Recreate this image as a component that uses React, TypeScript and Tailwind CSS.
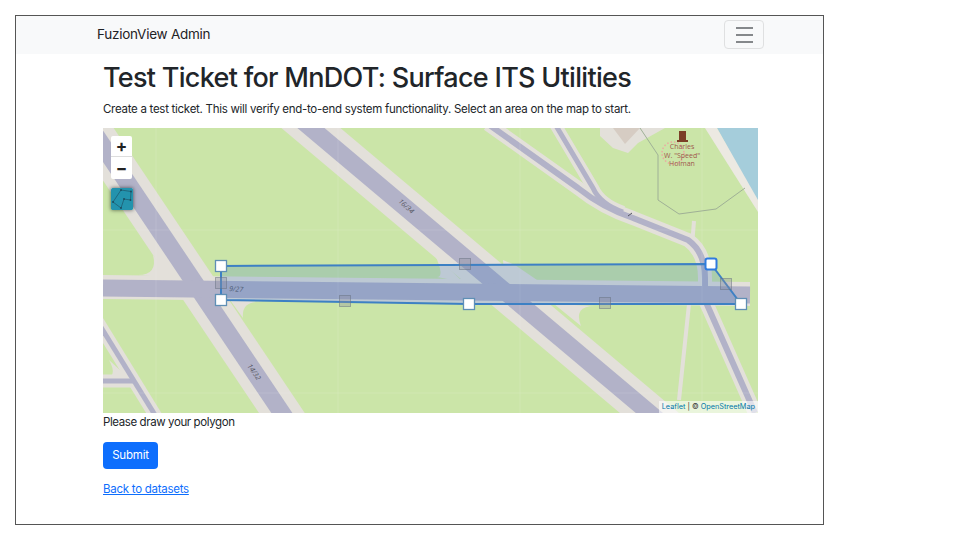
import { Fragment } from "react";

const GREEN = "#cbe5a8";
const SHOULDER = "#e3e0da";
const RUNWAY = "#b2b2c8";

// Map coordinates below are page pixels minus the map's origin (103, 128).
const corners = [
  [118, 138],
  [608, 136],
  [638, 176],
  [366, 176],
  [118, 172],
];
const middles = [
  [118, 155],
  [362, 136],
  [623, 156],
  [502, 175],
  [242, 173],
];
const iconPoints = [
  [2, 14],
  [10, 2],
  [20, 3.5],
  [19.5, 12],
  [13, 11],
  [10, 20],
];

function MapDrawing() {
  return (
    <svg viewBox="0 0 655 285" className="block h-[285px] w-[655px]">
      <rect width="655" height="285" fill={GREEN} />

      {/* water and building */}
      <polygon points="614,0 655,0 655,75" fill="#a5cddb" />
      <polygon points="602,0 614,0 655,72 655,84" fill="#ece9e2" />
      <polygon points="497,0 562,0 535,15 525,25 510,20 497,8" fill={SHOULDER} />
      <polygon points="510,0 537,0 522,16" fill="#d6ccc3" />

      {/* thin paths */}
      <path d="M591 93 L589 118" stroke={SHOULDER} strokeWidth="4" fill="none" />
      <path d="M586 176 L576 272" stroke={SHOULDER} strokeWidth="4" fill="none" />

      {/* shoulders */}
      <g fill="none" stroke={SHOULDER} strokeLinejoin="round">
        <path d="M-27 -22 L201 318" strokeWidth="38" />
        <path d="M158 -42 L588 320" strokeWidth="38" />
        <path d="M-20 170 L60 300" strokeWidth="13" />
        <path d="M0 253 L30 253" strokeWidth="13" />
        <path d="M385 -4 L475 60 Q500 80 530 90 L585 112 Q602 124 602 150 L602 172 L652 285" strokeWidth="14" />
        <path d="M452 -4 L490 60 Q497 76 520 84" strokeWidth="12" />
      </g>
      <polygon points="0,147 647,154 647,178 0,171" fill={SHOULDER} />

      {/* fillets where the runways meet */}
      <g fill={SHOULDER}>
        <path d="M50 127 Q55 147 35 147 L70 150 Z" />
        <path d="M127 172 L160 174 Q138 172 140 190 Z" />
        <path d="M332 127 Q342 149 334 149 L360 154 Z" />
        <path d="M400 132 L412 137 L434 152 L402 154 Z" />
        <path d="M451 176 L492 178 Q470 178 478 198 Z" />
        <path d="M6 232 Q16 250 0 250 L32 256 Z" />
      </g>

      {/* pavement */}
      <g fill="none" stroke={RUNWAY} strokeLinejoin="round">
        <path d="M-27 -22 L201 318" strokeWidth="17.5" />
        <path d="M158 -42 L588 320" strokeWidth="17.5" />
        <path d="M0 160 L647 167" strokeWidth="17" />
        <path d="M-20 170 L60 300" strokeWidth="5" />
        <path d="M0 253 L30 253" strokeWidth="5" />
        <path d="M385 -4 L475 60 Q500 80 530 90 L585 112 Q602 124 602 150 L602 172 L652 285" strokeWidth="6" />
        <path d="M452 -4 L490 60 Q497 76 520 84" strokeWidth="5" />
      </g>

      {/* tile seams */}
      <g stroke="#ffffff" strokeOpacity="0.12" strokeWidth="1">
        <path d="M53 0 V285 M235 0 V285 M417 0 V285 M599 0 V285 M0 102 H655 M0 265 H655" />
      </g>

      {/* boundary line and monument */}
      <path d="M537 0 L555 27 L555 72 L576 86 L613 81 L642 60" fill="none" stroke="#9fb096" strokeWidth="1" />
      <circle cx="570" cy="25" r="11" fill="none" stroke="#eba9a1" strokeWidth="1.5" strokeDasharray="1.5 2" />
      <path d="M576 3 H583 V12 H585 V14 H574 V12 H576 Z" fill="#7b3f26" />
      <g fontFamily="'Open Sans', sans-serif" fontSize="7" fill="#a0584c" textAnchor="middle">
        <text x="579" y="21">Charles</text>
        <text x="579" y="29.5">W. "Speed"</text>
        <text x="579" y="38">Holman</text>
      </g>

      {/* runway labels */}
      <g fontFamily="'Open Sans', sans-serif" fontSize="7" fill="#55555f" fontStyle="italic">
        <text x="126" y="163" transform="rotate(4 126 163)">9/27</text>
        <text x="144" y="238" transform="rotate(55 144 238)">14/32</text>
        <text x="295" y="74" transform="rotate(42 295 74)">16/34</text>
      </g>
      <path d="M525 88 L529 85" stroke="#55555f" strokeWidth="1" />

      {/* drawn polygon */}
      <polygon
        points={corners.map((p) => p.join(",")).join(" ")}
        fill="#2a6ec0"
        fillOpacity="0.2"
        stroke="#3d80c4"
        strokeWidth="2"
        strokeLinejoin="round"
      />
      {middles.map(([x, y]) => (
        <rect
          key={`${x}-${y}`}
          x={x - 5.5}
          y={y - 5.5}
          width="11"
          height="11"
          fill="#8f8f9f"
          fillOpacity="0.35"
          stroke="#667080"
          strokeOpacity="0.5"
        />
      ))}
      {corners.map(([x, y], i) => (
        <Fragment key={`${x}-${y}`}>
          <rect
            x={x - 5.5}
            y={y - 5.5}
            width="11"
            height="11"
            rx={i === 1 ? 2 : 0}
            fill="#ffffff"
            stroke={i === 1 ? "#2f7bdf" : "#5f8fb5"}
            strokeWidth={i === 1 ? 2 : 1.3}
          />
        </Fragment>
      ))}
    </svg>
  );
}

function DrawIcon() {
  return (
    <svg viewBox="0 0 22 22" className="h-[22px] w-[22px]">
      <rect width="22" height="22" rx="1.5" fill="#2393ad" />
      <polygon
        points={iconPoints.map((p) => p.join(",")).join(" ")}
        fill="none"
        stroke="#1c4a5c"
        strokeWidth="0.6"
      />
      {iconPoints.map(([cx, cy]) => (
        <circle key={`${cx}-${cy}`} cx={cx} cy={cy} r="0.9" fill="#1c4a5c" />
      ))}
    </svg>
  );
}

export default function App() {
  return (
    <div
      className="ml-[15px] mt-[15px] h-[510px] w-[809px] overflow-hidden border border-[#555555] bg-white text-[#212529]"
      style={{ fontFamily: "Inter, 'Liberation Sans', sans-serif" }}
    >
      <nav className="flex h-[38px] items-center justify-between bg-[#f8f9fa] pb-[1px] pl-[81px] pr-[59px]">
        <span className="text-[13.5px] tracking-[-0.25px] text-[#1f2225]">FuzionView Admin</span>
        <button className="flex h-[29px] w-[40px] flex-col items-center justify-center gap-[5px] rounded-[4px] border border-[#dfe0e1]">
          <span className="h-[2px] w-[17px] bg-[#85888b]" />
          <span className="h-[2px] w-[17px] bg-[#85888b]" />
          <span className="h-[2px] w-[17px] bg-[#85888b]" />
        </button>
      </nav>

      <main className="pl-[87px]">
        <h1 className="mt-[7px] text-[27px] font-medium leading-[34px] tracking-[-0.7px] text-[#212529]">
          Test Ticket for MnDOT: Surface ITS Utilities
        </h1>
        <p className="mt-[5px] text-[11.5px] leading-[18px] tracking-[-0.28px]">
          Create a test ticket. This will verify end-to-end system functionality. Select an area on the map to start.
        </p>

        <div className="relative mt-[10px] h-[285px] w-[655px] overflow-hidden">
          <MapDrawing />
          <div className="absolute left-[8px] top-[8px] flex w-[21px] flex-col overflow-hidden rounded-[2px] bg-white text-[#222222]">
            <span className="flex h-[21px] items-center justify-center border-b border-[#dddddd] text-[17px] font-bold leading-none">
              +
            </span>
            <span className="flex h-[22px] items-center justify-center text-[17px] font-bold leading-none">
              −
            </span>
          </div>
          <div className="absolute left-[8px] top-[60px] shadow-[0_0_4px_rgba(0,0,0,0.6)]">
            <DrawIcon />
          </div>
          <div className="absolute bottom-0 right-0 bg-white/60 px-[3px] text-[7.3px] leading-[12px] text-[#333333]">
            <span className="text-[#0078a8]">Leaflet</span> | © <span className="text-[#0078a8]">OpenStreetMap</span>
          </div>
        </div>

        <p className="text-[11.5px] leading-[18px] tracking-[-0.4px]">Please draw your polygon</p>
        <button className="mt-[11px] block h-[27px] w-[55px] rounded-[4px] bg-[#0d6efd] text-[11.5px] tracking-[-0.2px] text-white">
          Submit
        </button>
        <a href="#" className="mt-[11px] block text-[11.5px] leading-[18px] tracking-[-0.27px] text-[#0d6efd] underline">
          Back to datasets
        </a>
      </main>
    </div>
  );
}
